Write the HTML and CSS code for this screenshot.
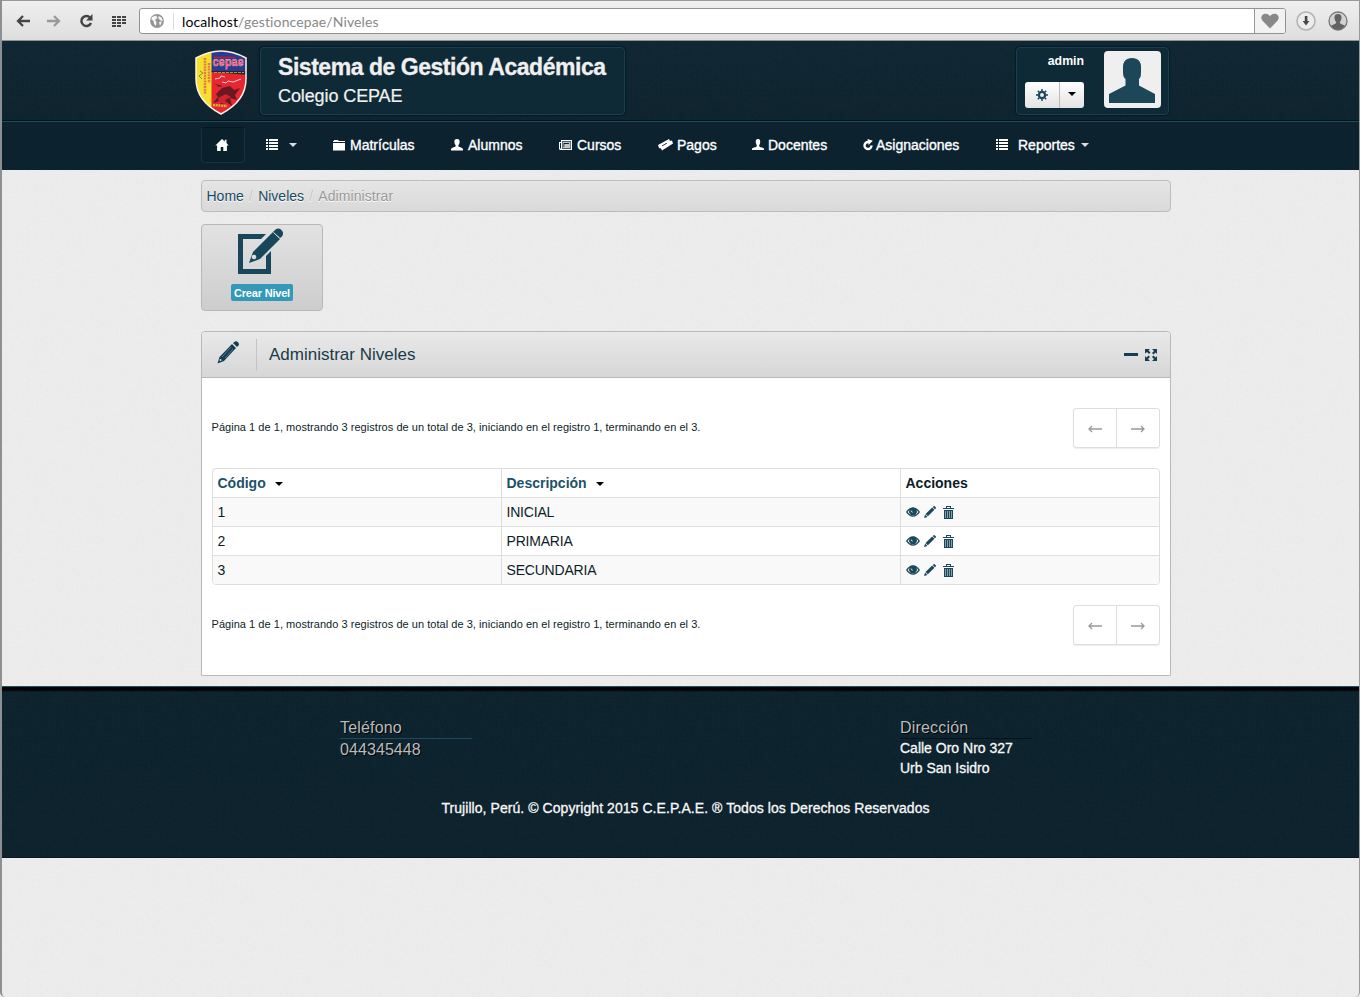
FILE: index.html
```
<!DOCTYPE html>
<html lang="es">
<head>
<meta charset="utf-8">
<title>Niveles</title>
<link rel="stylesheet" href="styles.css">
</head>
<body>
<svg class="defs" width="0" height="0">
  <symbol id="list" viewBox="0 0 12 12"><path d="M0 0h2v2H0zM3 0h9v2H3zM0 3h2v2H0zM3 3h9v2H3zM0 6h2v2H0zM3 6h9v2H3zM0 9h2v2H0zM3 9h9v2H3z"/></symbol>
  <symbol id="user" viewBox="0 0 12 12"><path d="M6 0C4 0 3.200 1.300 3.400 3c.1 1.500.6 2.500 1.200 3.100v1.500C3.500 8.300.3 9 0 10v1.500h12V10c-.3-1-3.500-1.700-4.600-2.400V6.100C8 5.500 8.500 4.500 8.600 3 8.800 1.300 8 0 6 0z"/></symbol>
  <symbol id="pencil" viewBox="0 0 14 14"><path d="M10.200 1.200l1-1q.6-.4 1.200.1l1.300 1.300q.5.600 0 1.200l-1 1zM9.500 1.800l2.700 2.700-7.700 7.600L1.800 9.400zM1.300 10l2.700 2.700L0 14z"/></symbol>
  <symbol id="eye" viewBox="0 0 14 10"><path fill-rule="evenodd" d="M0 5Q3 .2 7 .2T14 5Q11 9.800 7 9.800T0 5zM1.700 5Q4 8.600 7 8.600T12.300 5Q11.200 3.200 9.800 2.200A3.800 3.800 0 1 1 4.200 2.200Q2.800 3.200 1.700 5z"/><circle cx="7" cy="4" r="3.200"/><path d="M5.200 3.600q0 1.600 1.500 1.600" fill="none" stroke="#fff" stroke-width=".8"/></symbol>
  <symbol id="trash" viewBox="0 0 11 13"><path fill-rule="evenodd" d="M3 2V0h5v2h3v1H0V2zM4 2h3V1H4z"/><path d="M1 4h9v9H1z"/><path d="M2.500 5v7M4.500 5v7M6.500 5v7M8.500 5v7" stroke="#a4b5bd" stroke-width=".8"/></symbol>
</svg>
<div class="window">
  <div class="toolbar">
    <div class="tools">
      <svg width="14" height="12" viewBox="0 0 14 12"><path d="M7 1L2 6l5 5M2 6h12" fill="none" stroke="#444" stroke-width="2.300"/></svg>
      <svg width="14" height="12" viewBox="0 0 14 12"><path d="M7 1l5 5-5 5M12 6H0" fill="none" stroke="#999" stroke-width="2.300"/></svg>
      <svg width="14" height="14" viewBox="0 0 14 14"><path d="M11 3.500A5 5 0 1 0 12 9" fill="none" stroke="#444" stroke-width="2.500"/><path d="M13.500 0v6.500H7z" fill="#444"/></svg>
      <svg width="15" height="11" viewBox="0 0 15 11" fill="#444"><path d="M0 0h4v2H0zM5 0h4v2H5zM10 0h4v2h-4zM0 3h4v2H0zM5 3h4v2H5zM10 3h4v2h-4zM0 6h4v2H0zM5 6h4v2H5zM0 9h4v2H0zM5 9h4v2H5z"/><path d="M10 6h4v2h-4z"/></svg>
    </div>
    <div class="address">
      <svg width="14" height="14" viewBox="0 0 14 14"><circle cx="7" cy="7" r="6.900" fill="#949494"/><path d="M2 3l4-1.500L7.500 4 5 6l1.500 2L6 12 4 10 3.500 7 1.500 5.500zM8.500 2l3 1.500L13 7l-2.500-.5L8.500 4.500zM9 8l3-.5-2 4.500z" fill="#f5f5f5"/></svg>
      <span class="url"><b>localhost</b>/gestioncepae/Niveles</span>
      <span class="heart"><svg width="18" height="16" viewBox="0 0 18 16"><path d="M9 15.500L1.300 7.500A4.300 4.300 0 0 1 1 2.500C2.500 0 7 0 9 3.200 11 0 15.500 0 17 2.500a4.300 4.300 0 0 1-.3 5z" fill="#888"/></svg></span>
    </div>
    <svg class="dl" width="20" height="20" viewBox="0 0 20 20"><circle cx="10" cy="10" r="9" fill="#ededed" stroke="#b2b2b2" stroke-width="1.500"/><path d="M8.800 5h2.600v5h2L10 14.500 6.700 10h2.100z" fill="#484848"/></svg>
    <svg width="20" height="20" viewBox="0 0 20 20"><circle cx="10" cy="10" r="9" fill="#d2d2d2" stroke="#777" stroke-width="1.300"/><path d="M10 3C7.500 3 6.300 4.600 6.500 7c.1 2 1 3.500 1.800 4.200-.3 2-3.300 2-5.300 3.600q2.900 3.900 7 3.900t7-3.900c-2-1.600-5-1.600-5.300-3.600.8-.7 1.700-2.200 1.800-4.200C13.700 4.600 12.500 3 10 3z" fill="#626262"/></svg>
  </div>

  <header class="header">
    <svg class="logo" width="54" height="68" viewBox="0 0 54 68">
      <defs><clipPath id="shield"><path d="M2 9Q15 2 27 2t25 7v21q0 22-25 35Q2 52 2 30z"/></clipPath></defs>
      <g clip-path="url(#shield)">
        <path fill="#e42732" d="M0 0h54v68H0z"/><path fill="#293c90" d="M17 0h37v22H17z"/><path fill="#f5df31" d="M0 0h17.500v68H0z"/>
        <path fill="#272525" d="M17.500 22H54v4l-36.500-3z"/><path d="M20 23.500h30" stroke="#a89f38" stroke-dasharray="3 1"/>
        <path d="M11 9v36M15 14v20" stroke="#e57b42" stroke-width="2.500" stroke-dasharray="2 .8"/><path d="M6 22l3 2-4 3 3 3" fill="none" stroke="#73905b"/>
        <path d="M22 45l6-6 8-2 4 4 6-2-5 7 2 5-7-2 2 8-7-5-4 6-1-6-7 2 5-6zM25 38l-4-3 8 2z" fill="#6b1921"/><path d="M24 49l8-4 5 3-6 3 2 4-8-1z" fill="#d32331"/>
        <path d="M21 30l5-1 1-2 4 1M28 33l4 1 2-2 5 1 8-3" fill="none" stroke="#f7c9c4"/><path d="M19 56l14 1" stroke="#d7b22f" stroke-width="2.500" stroke-dasharray="2 .7"/>
        <path d="M20 8.500h21" stroke="#ad2449" stroke-width="1.500"/>
        <text x="18.500" y="17" textLength="31" lengthAdjust="spacingAndGlyphs" class="logo-text">cepae</text>
      </g>
      <path d="M2 9Q15 2 27 2t25 7v21q0 22-25 35Q2 52 2 30z" fill="none" stroke="#fff4e7" stroke-width="1.500"/>
    </svg>
    <div class="brand"><h1>Sistema de Gestión Académica</h1><p>Colegio CEPAE</p></div>
    <div class="account">
      <div class="account-left"><strong>admin</strong>
        <div class="split"><span><svg width="12" height="12" viewBox="0 0 12 12"><circle cx="6" cy="6" r="3.100" fill="none" stroke="#1b485b" stroke-width="2.300"/><path d="M6 0v2M6 10v2M0 6h2M10 6h2M1.800 1.800l1.400 1.400M8.800 8.800l1.400 1.400M1.800 10.200l1.400-1.400M8.800 3.200l1.400-1.400" stroke="#1b485b" stroke-width="1.500"/></svg></span><span><i class="caret"></i></span></div>
      </div>
      <svg class="avatar" width="57" height="57" viewBox="0 0 57 57"><rect width="57" height="57" rx="4" fill="#efefef"/><path d="M28 7c-6 0-9 3.500-9 9v5c0 4 1 6 2.500 7v6.500L5 43v9h46v-9l-16-8.500V28c1.500-1 2-3 2-7v-5c0-5.500-3-9-9-9z" fill="#1c4759"/></svg>
    </div>
  </header>

  <nav class="nav">
    <a class="home"><svg width="14" height="12" viewBox="0 0 14 12"><path d="M7 0L.3 6.500h1.800V12h3.600V8h2.600v4h3.600V6.500h1.800L11.500 4V.8H9.800v1.600z"/></svg></a>
    <a><svg width="12" height="12"><use href="#list"/></svg><i class="caret gap"></i></a>
    <a><svg width="12" height="12" viewBox="0 0 12 12"><path d="M1 2V1h4l.6 1H12v1H0V2zM0 4h12v7.500H0z"/></svg>Matrículas</a>
    <a><svg width="12" height="12"><use href="#user"/></svg>Alumnos</a>
    <a><svg width="13" height="11" viewBox="0 0 13 11"><path fill-rule="evenodd" d="M2 0h11v10H1.500Q0 10 0 8.500V2h2zM3 1.300v7.400h9V1.300zM1 3v5.500h1V3z"/><path fill-rule="evenodd" d="M3.500 2h8v6h-8zM4.500 3v4h.8V4H10V3z" opacity=".75"/></svg>Cursos</a>
    <a><svg class="near" width="15" height="12" viewBox="0 0 15 12"><path fill-rule="evenodd" d="M0 6L11 0l1 2 2-.5 1 3L4 11.500 3 9.500 1 9zM4 6.500l.3.700L9 4.500l-.3-.7z"/></svg>Pagos</a>
    <a><svg class="near" width="12" height="12" viewBox="0 0 12 12"><path d="M6 0C3.800 0 3.500 2 3.900 4c.2 1 .8 2 1 2.400-.2 1.400-1 1.600-2.900 2.200L0 9.500V11h12V9.500l-2-.9c-1.900-.6-2.700-.8-2.900-2.200C7.300 6 7.900 5 8.100 4 8.500 2 8.200 0 6 0z"/></svg>Docentes</a>
    <a><svg class="small" width="10" height="12" viewBox="0 0 10 12"><path d="M5.500 3A3.500 3.500 0 1 0 8.500 6.500" fill="none" stroke="#fff" stroke-width="2.400"/><path d="M4.500 0L9.800 1.700 5.500 6z"/></svg>Asignaciones</a>
    <a><svg class="far" width="12" height="12"><use href="#list"/></svg>Reportes<i class="caret"></i></a>
  </nav>

  <main class="content">
    <div class="crumbs"><a>Home</a><i>/</i><a>Niveles</a><i>/</i><span>Adiministrar</span></div>
    <a class="create">
      <svg width="46" height="46" viewBox="0 0 46 46"><path d="M28 6H0v40h33V23l-5 5v13H5V11h18z"/><path d="M35 4l7 7-20 20-11 4 4-11z"/><path d="M36.500 2.500q3-3.500 6.500-1 3.500 3.500 1 7L42 10l-7-6z"/><circle cx="16" cy="29" r="2.300" fill="#ddd"/><path d="M35.500 4.500l6 5.500" stroke="#d8d8d8"/></svg>
      <span>Crear Nivel</span>
    </a>
    <section class="panel">
      <div class="panel-head">
        <svg width="22" height="23" viewBox="0 0 22 23"><path d="M16 2l2-1.500q1.500-.8 3 .8t.7 3L20 6zM15 3l4 4L7 20l-6.500 2.500L2.500 16z"/><path d="M14 6L5 16M16 8L8 17" stroke="#7296aa" stroke-width=".7"/><circle cx="3.500" cy="19" r="1" fill="#ddd"/></svg>
        <h2>Administrar Niveles</h2>
        <svg width="34" height="12" viewBox="0 0 34 12"><path d="M0 4h14v3H0zM21 0h5l-1.500 1.500 2 2-1.500 1.500-2-2L21 4.500zM33 0v5L31.500 3.500l-2 2L28 4l2-2L28 0zM21 12V7l1.500 1.500 2-2L26 8l-2 2 2 2zM33 12h-5l2-2-2-2 1.500-1.500 2 2L33 7z"/></svg>
      </div>
      <div class="panel-body">
        <div class="pager"><p>Página 1 de 1, mostrando 3 registros de un total de 3, iniciando en el registro 1, terminando en el 3.</p><div class="pages"><span><svg width="14" height="8"><path d="M4 1L1 4l3 3M1 4h13"/></svg></span><span><svg width="14" height="8"><path d="M10 1l3 3-3 3M13 4H0"/></svg></span></div></div>
        <div class="table">
          <div class="row head"><span><a>Código</a><i class="caret"></i></span><span><a>Descripción</a><i class="caret"></i></span><span>Acciones</span></div>
          <div class="row odd"><span>1</span><span>INICIAL</span><span class="actions"><svg width="14" height="10"><use href="#eye"/></svg><svg width="12" height="12"><use href="#pencil"/></svg><svg width="11" height="13"><use href="#trash"/></svg></span></div>
          <div class="row"><span>2</span><span>PRIMARIA</span><span class="actions"><svg width="14" height="10"><use href="#eye"/></svg><svg width="12" height="12"><use href="#pencil"/></svg><svg width="11" height="13"><use href="#trash"/></svg></span></div>
          <div class="row odd"><span>3</span><span>SECUNDARIA</span><span class="actions"><svg width="14" height="10"><use href="#eye"/></svg><svg width="12" height="12"><use href="#pencil"/></svg><svg width="11" height="13"><use href="#trash"/></svg></span></div>
        </div>
        <div class="pager"><p>Página 1 de 1, mostrando 3 registros de un total de 3, iniciando en el registro 1, terminando en el 3.</p><div class="pages"><span><svg width="14" height="8"><path d="M4 1L1 4l3 3M1 4h13"/></svg></span><span><svg width="14" height="8"><path d="M10 1l3 3-3 3M13 4H0"/></svg></span></div></div>
      </div>
    </section>
  </main>

  <footer class="footer">
    <div class="contact">
      <div><h3 class="lit">Teléfono</h3><p class="phone">044345448</p></div>
      <div><h3>Dirección</h3><p>Calle Oro Nro 327<br>Urb San Isidro</p></div>
    </div>
    <p class="copy">Trujillo, Perú. © Copyright 2015 C.E.P.A.E. ® Todos los Derechos Reservados</p>
  </footer>
</div>
</body>
</html>
```
FILE: styles.css
```
:root { --grain: url("data:image/svg+xml,%3Csvg xmlns='http://www.w3.org/2000/svg' width='150' height='150'%3E%3Cfilter id='n'%3E%3CfeTurbulence baseFrequency='.6' numOctaves='2' stitchTiles='stitch'/%3E%3CfeColorMatrix type='saturate' values='0'/%3E%3C/filter%3E%3Crect width='150' height='150' filter='url(%23n)' opacity='.06'/%3E%3C/svg%3E"); }
* { box-sizing: border-box; }
body { margin: 0; height: 997px; overflow: hidden; background: var(--grain) #ededed; font: 14px/20px "Liberation Sans", Arial, sans-serif; color: #0c1d28; }
h1, h2, h3, p { margin: 0; font-weight: normal; }
svg { display: block; flex: none; }
.defs { position: absolute; }
.window { height: 997px; border-left: 2px solid #8d9093; border-right: 1px solid #999; border-radius: 0 0 5px 5px; }
.caret { display: inline-block; border: 4px solid transparent; border-top-color: currentColor; border-bottom: 0; }

.toolbar { height: 41px; display: flex; align-items: center; padding: 1px 11px 0 14px; background: linear-gradient(#efefef, #dedede); border-top: 1px solid #999; border-bottom: 1px solid #929292; }
.tools { width: 123px; display: flex; align-items: center; gap: 17px; }
.tools svg:nth-child(3) { margin-left: 1px; }
.tools svg:nth-child(4) { margin-left: 2px; }
.address { width: 1147px; height: 26px; display: flex; align-items: center; padding-left: 10px; border: 1px solid #929292; border-radius: 3px; background: #fff; overflow: hidden; }
.url { margin-left: 9px; border-left: 1px solid #ddd; padding-left: 8px; font: 14px/17px "Lato", sans-serif; letter-spacing: .12px; color: #888; flex: 1; }
.url b { font-weight: normal; color: #000; }
.heart { width: 31px; height: 24px; border-left: 1px solid #999; background: #f2f2f2; display: flex; align-items: center; justify-content: center; }
.dl { margin: 0 12px 0 10px; }

.header { height: 80px; display: flex; align-items: flex-start; padding: 6px 190px 0 192px; background: var(--grain), linear-gradient(#0e2632, #0c222d); border-bottom: 1px solid #03131c; }
.logo { margin-top: 2px; }
.logo-text { font: bold 13px "Liberation Sans", sans-serif; fill: #ff4150; stroke: #fff; stroke-width: .25px; }
.brand, .account { height: 68px; border: 1px solid #174050; border-radius: 4px; background: #0f2a37; box-shadow: 0 0 1px 1px #081a24; }
.brand { width: 365px; margin-left: 12px; padding: 7px 17px; color: #f0f0f0; white-space: nowrap; }
.brand h1 { font-size: 23px; line-height: 24px; font-weight: bold; letter-spacing: -.46px; -webkit-text-stroke: .3px #f0f0f0; }
.brand p { font-size: 18px; line-height: 20px; padding-top: 7px; letter-spacing: -.1px; -webkit-text-stroke: .2px #f0f0f0; }
.account { width: 153px; margin-left: auto; padding: 3px 7px 0 8px; display: flex; justify-content: space-between; }
.account-left { width: 59px; text-align: right; color: #fff; font-size: 12.300px; line-height: 20px; }
.split { height: 26px; margin-top: 11px; display: flex; border-radius: 3px; background: linear-gradient(#fff, #e3e3e3); color: #000; }
.split span { display: flex; align-items: center; justify-content: center; width: 34px; }
.split span + span { width: 25px; border-left: 1px solid #bbb; }
.split .caret { margin-top: -2px; }

.nav { height: 49px; border-top: 1px solid #1d4b5e; background: #0c232f; padding: 5px 0 0 199px; display: grid; grid-template-columns: 65px 67px 118px 108px 99px 94px 111px 133px 150px; align-items: start; color: #fff; }
.nav a { display: flex; align-items: center; -webkit-text-stroke: .35px #fff; height: 36px; }
.nav a svg { fill: #fff; margin-right: 5px; }
.nav a .small { margin-right: 3px; }
.nav a .near { margin-right: 4px; }
.nav a .far { margin-right: 10px; }
.nav .home { width: 44px; justify-content: center; border: 1px solid #123444; border-top-color: #061821; border-radius: 4px; background: #0a202b; }
.nav .home svg { margin: 0 2px 0 0; }
.nav .caret { margin-left: 6px; color: #ddd; }

.content { padding: 10px 188px 0 199px; }
.crumbs { height: 32px; padding: 0 4.500px; display: flex; align-items: center; border: 1px solid #bdbdbd; border-radius: 4px; background: linear-gradient(#e5e5e5, #d9d9d9); color: #999; text-shadow: 0 1px #fff; }
.crumbs a { color: #174a62; }
.crumbs i { color: #c4c4c4; padding: 0 5.200px; font-style: normal; }
.crumbs span { letter-spacing: .08px; }
.create { margin-top: 12px; width: 122px; height: 87px; padding-top: 3px; display: flex; flex-direction: column; align-items: center; border: 1px solid #b8b8b8; border-radius: 4px; background: linear-gradient(#e2e2e2, #cdcdcd); }
.create svg { margin-right: 3px; fill: #18465a; }
.create span { margin-top: 10px; height: 17px; padding: 2px 3px 0; font-size: 11px; line-height: 15px; font-weight: bold; color: #fff; background: #3299b9; border-radius: 2px; letter-spacing: -.2px; }
.panel { margin-top: 20px; height: 345px; border: 1px solid #b9b9b9; border-radius: 4px 4px 0 0; background: #fff; }
.panel-head { height: 46px; padding: 0 12px 0 15px; display: flex; align-items: center; border-bottom: 1px solid #b8b8b8; border-radius: 4px 4px 0 0; background: linear-gradient(#e9e9e9, #d6d6d6); fill: #153e50; }
.panel-head svg:first-child { margin-top: -4px; }
.panel-head h2 { flex: 1; margin-left: 17px; height: 32px; padding-left: 12px; border-left: 1px solid #c1c4ca; line-height: 32px; font-size: 17px; color: #183b49; }
.panel-body { padding: 30px 10px 0; }
.pager { height: 40px; display: flex; align-items: center; justify-content: space-between; font-size: 11px; letter-spacing: .039px; }
.pager p { margin: -2px 0 0 -.5px; }
.pages { height: 40px; width: 87px; display: flex; border: 1px solid #ddd; border-radius: 3px; box-shadow: 0 1px 1px #eee; }
.pages span { flex: 1; display: flex; align-items: center; justify-content: center; padding-top: 2px; }
.pages span + span { border-left: 1px solid #ddd; }
.pages path { fill: none; stroke: #999; stroke-width: 1.300; }
.table { margin: 20px 0; border: 1px solid #ddd; border-radius: 4px; overflow: hidden; }
.row { display: grid; grid-template-columns: 288px 399px 1fr; height: 29px; border-top: 1px solid #ddd; }
.row > span { display: flex; align-items: center; padding-left: 4.500px; letter-spacing: -.2px; }
.row > span + span { border-left: 1px solid #ddd; }
.row.head > span { letter-spacing: 0; }
.head { font-weight: bold; border-top: 0; height: 28px; }
.head a { color: #1d516a; }
.head .caret { margin: 1px 0 0 9px; color: #000; }
.odd { background: #f9f9f9; }
.actions { fill: #1b485a; gap: 4px; }
.row > .actions { padding-left: 5px; }
.actions svg:last-child { margin-left: 3px; }

.footer { margin-top: 10px; height: 172px; border-top: 1px solid #1b5367; background: var(--grain), linear-gradient(#000 0 3px, #0b222d 5px, #0b212c); color: #f3f3f3; border-bottom: 1px solid #0a1820; }
.contact { display: grid; grid-template-columns: 560px 300px; padding: 31px 0 0 338px; height: 111px; }
.contact h3 { width: 132px; height: 21px; font-size: 16px; line-height: 20px; letter-spacing: .18px; color: #bbb; text-shadow: 1px 1px #000; border-bottom: 1px solid #03131b; }
.contact .lit { border-color: #194c62; }
.contact p, .copy { -webkit-text-stroke: .3px #fff; }
.contact p { margin-top: -1px; }
.contact .phone { margin-top: 0; font-size: 16px; line-height: 22px; letter-spacing: .08px; color: #bbb; text-shadow: 1px 1px #000; -webkit-text-stroke: 0; }
.copy { text-align: center; padding-left: 10px; letter-spacing: .065px; }
```
